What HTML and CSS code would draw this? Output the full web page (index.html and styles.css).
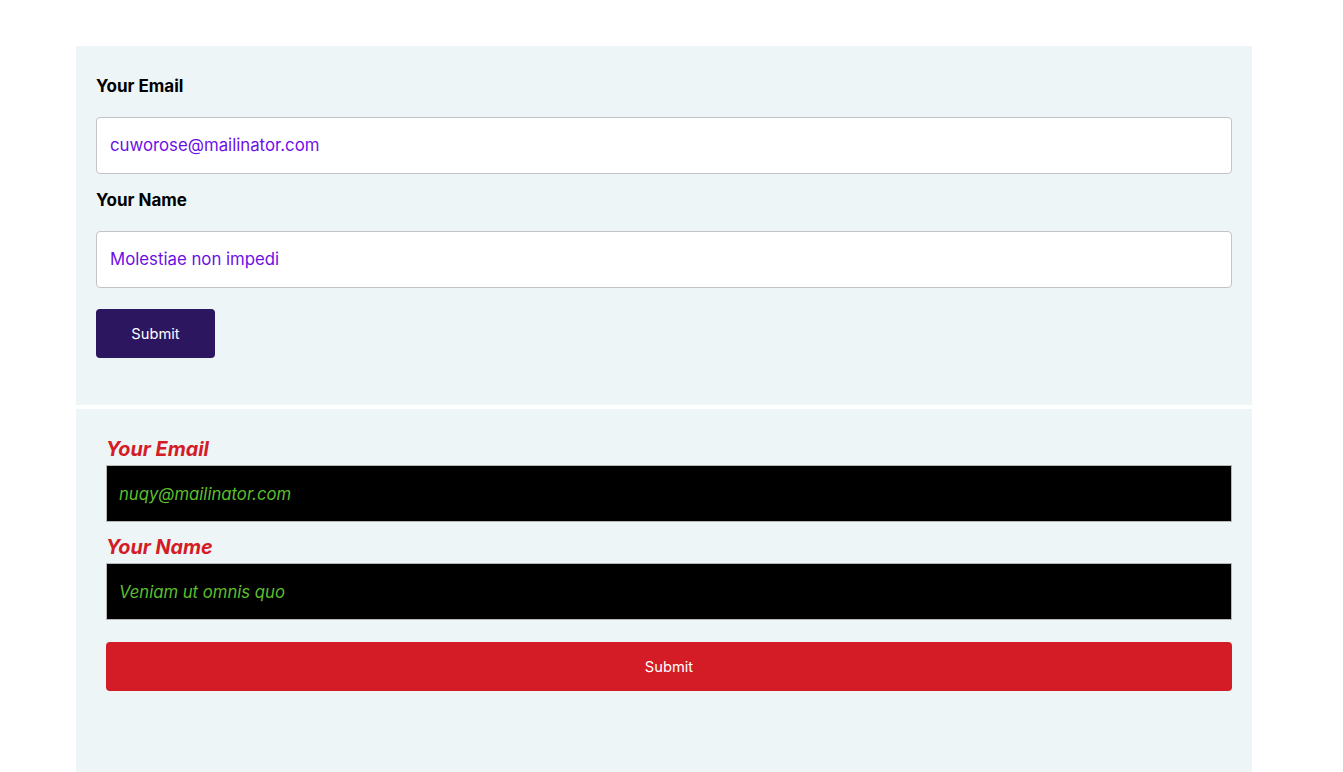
FILE: index.html
```html
<!DOCTYPE html>
<html lang="en">
<head>
<meta charset="utf-8">
<title>Forms</title>
<link rel="stylesheet" href="styles.css">
</head>
<body>
<div class="page">
  <section class="panel panel-default">
    <form class="form-default">
      <label class="label-default">Your Email</label>
      <input class="input-default" type="text" value="cuworose@mailinator.com">
      <label class="label-default">Your Name</label>
      <input class="input-default" type="text" value="Molestiae non impedi">
      <button class="btn-default" type="button">Submit</button>
    </form>
  </section>
  <section class="panel panel-custom">
    <form class="form-custom">
      <label class="label-custom">Your Email</label>
      <input class="input-custom" type="text" value="nuqy@mailinator.com">
      <label class="label-custom">Your Name</label>
      <input class="input-custom" type="text" value="Veniam ut omnis quo">
      <button class="btn-custom" type="button">Submit</button>
    </form>
  </section>
</div>
</body>
</html>
```

FILE: styles.css
```css
* { box-sizing: border-box; }
html, body { margin: 0; padding: 0; background: #fff; }
body { font-family: Inter, "Noto Sans", sans-serif; }

.page {
  width: 1176px;
  margin: 46px 0 0 76px;
  display: flex;
  flex-direction: column;
  gap: 4px;
}

.panel { background: #edf5f7; }

.panel-default { padding: 20px 20px 47px; }
.form-default { display: flex; flex-direction: column; align-items: flex-start; }

.label-default {
  font-weight: 700;
  font-size: 17px;
  line-height: 20px;
  padding: 10px 0;
  color: #000;
}
.input-default {
  width: 100%;
  height: 57px;
  margin: 11px 0 6px;
  padding: 0 13px 2px;
  border: 1px solid #c4c4c8;
  border-radius: 4px;
  background: #fff;
  font-family: inherit;
  font-size: 16.8px;
  color: #6c0fe6;
  outline: none;
}
.btn-default {
  margin-top: 15px;
  width: 119px;
  height: 49px;
  border: 0;
  border-radius: 4px;
  background: #2c1660;
  color: #fff;
  font-family: inherit;
  font-size: 14.7px;
}

.panel-custom { padding: 28px 20px 81px 30px; }
.form-custom { display: flex; flex-direction: column; }

.label-custom {
  font-weight: 700;
  font-style: italic;
  font-size: 19.8px;
  line-height: 24px;
  color: #d41c27;
  margin-bottom: 4px;
}
.input-custom {
  width: 100%;
  height: 57px;
  margin-bottom: 13px;
  padding: 0 12px;
  border: 1px solid #b8b8b8;
  border-radius: 0;
  background: #000;
  font-family: inherit;
  font-style: italic;
  font-size: 16.7px;
  color: #5cbf2c;
  outline: none;
}
.btn-custom {
  margin-top: 9px;
  width: 100%;
  height: 49px;
  border: 0;
  border-radius: 4px;
  background: #d41c27;
  color: #fff;
  font-family: inherit;
  font-size: 14.7px;
}
```
